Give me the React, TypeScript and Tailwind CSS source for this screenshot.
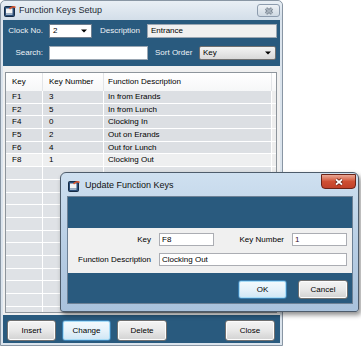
import React from "react"

const rows = [
  { key: "F1", num: "3", desc: "In from Erands", light: false },
  { key: "F2", num: "5", desc: "In from Lunch", light: false },
  { key: "F4", num: "0", desc: "Clocking In", light: false },
  { key: "F5", num: "2", desc: "Out on Erands", light: false },
  { key: "F6", num: "4", desc: "Out for Lunch", light: false },
  { key: "F8", num: "1", desc: "Clocking Out", light: true },
]

const empty = Array.from({ length: 12 }, (_, i) => i)

function AppIcon() {
  return (
    <svg width="12" height="12" viewBox="0 0 12 12">
      <rect x="0.5" y="1.5" width="10" height="10" rx="1" fill="#2c4e78" stroke="#172c45" />
      <rect x="2" y="3.5" width="6.5" height="5" fill="#f4f4f4" />
      <rect x="2" y="8.5" width="6.5" height="1.5" fill="#9fb3c8" />
      <path d="M5.5 4 Q8.5 0.5 11.5 2.5" stroke="#e2562b" strokeWidth="1.6" fill="none" />
    </svg>
  )
}

function CloseGlyph({ fill, edge }: { fill: string; edge: string }) {
  return (
    <svg width="10" height="8" viewBox="0 0 10 8">
      <path d="M2 1.5 L8 6.5 M8 1.5 L2 6.5" stroke={edge} strokeWidth="3.4" />
      <path d="M2 1.5 L8 6.5 M8 1.5 L2 6.5" stroke={fill} strokeWidth="1.8" />
    </svg>
  )
}

function Arrow() {
  return (
    <svg width="6" height="4" viewBox="0 0 6 4">
      <path d="M0 0.5h6L3 3.5z" fill="#000" />
    </svg>
  )
}

function Button({ label, width, focus }: { label: string; width: string; focus?: boolean }) {
  return (
    <button
      type="button"
      className={
        focus
          ? `${width} rounded-[3px] border border-[#3c7fb1] bg-linear-to-b from-[#f4fafd] via-[#e6f2fa] to-[#cfe6f5] shadow-[inset_0_0_0_1px_#a7dcf7] text-black`
          : `${width} rounded-[3px] border border-[#707070] bg-linear-to-b from-[#f4f4f4] via-[#e8e8e8] to-[#d2d2d2] shadow-[inset_0_0_0_1px_#fcfcfc] text-black`
      }>
      {label}
    </button>
  )
}

export default function App() {
  return (
    <div className="relative h-[348px] w-[361px] overflow-hidden bg-white font-['Liberation_Sans',Arial,sans-serif] text-[8px] leading-none text-black">
      {/* main window */}
      <div className="flex h-[346px] w-[283px] flex-col rounded-t-[5px] border border-[#8996a4] bg-[#dbe4ed]">
        <div className="relative flex h-[19px] items-center gap-[3px] rounded-t-[5px] bg-linear-to-b from-[#e9eff5] to-[#d3dee9] pl-[3px]">
          <AppIcon />
          <span className="text-[9px] text-[#1e2a36]">Function Keys Setup</span>
          <div className="absolute right-[2px] top-[3px] flex h-[13px] w-[23px] items-center justify-center rounded-[3px] border border-[#8d9cae] bg-linear-to-b from-[#eef2f6] to-[#cfd9e3]">
            <CloseGlyph fill="#a9b3be" edge="#6f7b88" />
          </div>
        </div>

        <div className="mx-[2px] mb-[2px] flex flex-1 flex-col">
          {/* top panel */}
          <div className="flex h-[46px] flex-col gap-[8px] bg-[#295a7e] pt-[4px] text-[#eef2f6]">
            <div className="flex h-[14px] items-center">
              <span className="w-[40px] text-right">Clock No.</span>
              <div className="ml-[6px] flex h-[14px] w-[43px] items-center justify-between border border-[#6f7f90] bg-white pl-[3px] pr-[4px] text-black">
                <span>2</span>
                <Arrow />
              </div>
              <span className="ml-[8px] w-[47px]">Description</span>
              <div className="flex h-[14px] w-[130px] items-center border border-[#9aa6b2] bg-[#f0f0f0] pl-[3px] text-black">
                Entrance
              </div>
            </div>
            <div className="flex h-[14px] items-center">
              <span className="w-[40px] text-right">Search:</span>
              <div className="ml-[6px] h-[14px] w-[99px] border border-[#9aa6b2] bg-white" />
              <span className="ml-[7px] w-[44px]">Sort Order</span>
              <div className="flex h-[14px] w-[77px] items-center justify-between rounded-[2px] border border-[#707070] bg-linear-to-b from-[#f4f4f4] to-[#d8d8d8] pl-[3px] pr-[4px] text-black">
                <span>Key</span>
                <Arrow />
              </div>
            </div>
          </div>

          {/* list */}
          <div className="flex-1 bg-[#f0f0f0] pl-[2px] pt-[6px]">
            <div className="h-[241px] w-[272px] overflow-hidden border border-[#8e959c] bg-[#dfe2e6]">
              <div className="grid h-[18px] grid-cols-[37px_61px_168px_1fr] bg-linear-to-b from-white to-[#f6f7f8]">
                <div className="flex items-center border-r border-[#e3e5e8] pl-[6px]">Key</div>
                <div className="flex items-center border-r border-[#e3e5e8] pl-[6px]">Key Number</div>
                <div className="flex items-center border-r border-[#e3e5e8] pl-[4px]">Function Description</div>
                <div />
              </div>
              {rows.map((r) => (
                <div
                  key={r.key}
                  className={
                    r.light
                      ? "grid h-[12.7px] grid-cols-[37px_61px_168px_1fr] border-b border-white bg-[#eeeff0]"
                      : "grid h-[12.7px] grid-cols-[37px_61px_168px_1fr] border-b border-white bg-[#dcdfe3]"
                  }>
                  <div className="flex items-center border-r border-white pl-[6px]">{r.key}</div>
                  <div className="flex items-center border-r border-white pl-[6px]">{r.num}</div>
                  <div className="flex items-center border-r border-white pl-[4px]">{r.desc}</div>
                  <div className="bg-[#eeeeee]" />
                </div>
              ))}
              {empty.map((i) => (
                <div
                  key={i}
                  className="grid h-[12.7px] grid-cols-[37px_61px_168px_1fr] border-b border-white bg-[#dfe2e6]">
                  <div className="border-r border-white" />
                  <div className="border-r border-white" />
                  <div className="border-r border-white" />
                  <div className="bg-[#eeeeee]" />
                </div>
              ))}
            </div>
          </div>

          {/* bottom bar */}
          <div className="flex h-[28px] items-start bg-[#295a7e] pl-[4px] pt-[5px]">
            <div className="flex h-[21px] gap-[6px]">
              <Button label="Insert" width="w-[49px]" />
              <Button label="Change" width="w-[49px]" focus />
              <Button label="Delete" width="w-[50px]" />
            </div>
            <div className="ml-[58px] flex h-[21px]">
              <Button label="Close" width="w-[50px]" />
            </div>
          </div>
        </div>
      </div>

      {/* dialog */}
      <div className="absolute left-[60px] top-[172px] flex h-[140px] w-[299px] flex-col rounded-t-[6px] rounded-b-[3px] border border-[#4e5c6b] bg-linear-to-b from-[#cfe0f0] via-[#b9cfe5] to-[#a9c2dc] shadow-[2px_3px_5px_rgba(0,0,0,0.45)]">
        <div className="relative flex h-[23px] items-center gap-[5px] pl-[7px] pt-[2px]">
          <AppIcon />
          <span className="text-[9px] text-[#111]">Update Function Keys</span>
          <div className="absolute right-[2px] top-[1px] flex h-[15px] w-[35px] items-center justify-center rounded-b-[4px] border border-[#6b2317] bg-linear-to-b from-[#e9a896] via-[#cf4f33] to-[#c0412a]">
            <CloseGlyph fill="#ffffff" edge="#5a1a10" />
          </div>
        </div>
        <div className="ml-[6px] mr-[5px] flex h-[108px] flex-col border border-[#6d8196]">
          <div className="h-[31px] bg-[#295a7e]" />
          <div className="flex h-[45px] flex-col gap-[7px] bg-[#f0f0f0] pt-[5px]">
            <div className="flex h-[13px] items-center">
              <span className="w-[83px] text-right">Key</span>
              <div className="ml-[8px] flex h-[13px] w-[55px] items-center border border-[#abadb3] bg-white pl-[2px]">F8</div>
              <span className="w-[70px] text-right">Key Number</span>
              <div className="ml-[8px] flex h-[13px] w-[55px] items-center border border-[#abadb3] bg-white pl-[2px] text-[#3a1030]">1</div>
            </div>
            <div className="flex h-[13px] items-center">
              <span className="w-[83px] text-right">Function Description</span>
              <div className="ml-[8px] flex h-[13px] w-[188px] items-center border border-[#abadb3] bg-white pl-[2px]">Clocking Out</div>
            </div>
          </div>
          <div className="flex flex-1 justify-end gap-[11px] bg-[#295a7e] pr-[4px] pt-[7px]">
            <div className="flex h-[19px]">
              <Button label="OK" width="w-[49px]" focus />
            </div>
            <div className="flex h-[19px]">
              <Button label="Cancel" width="w-[50px]" />
            </div>
          </div>
        </div>
      </div>
    </div>
  )
}
